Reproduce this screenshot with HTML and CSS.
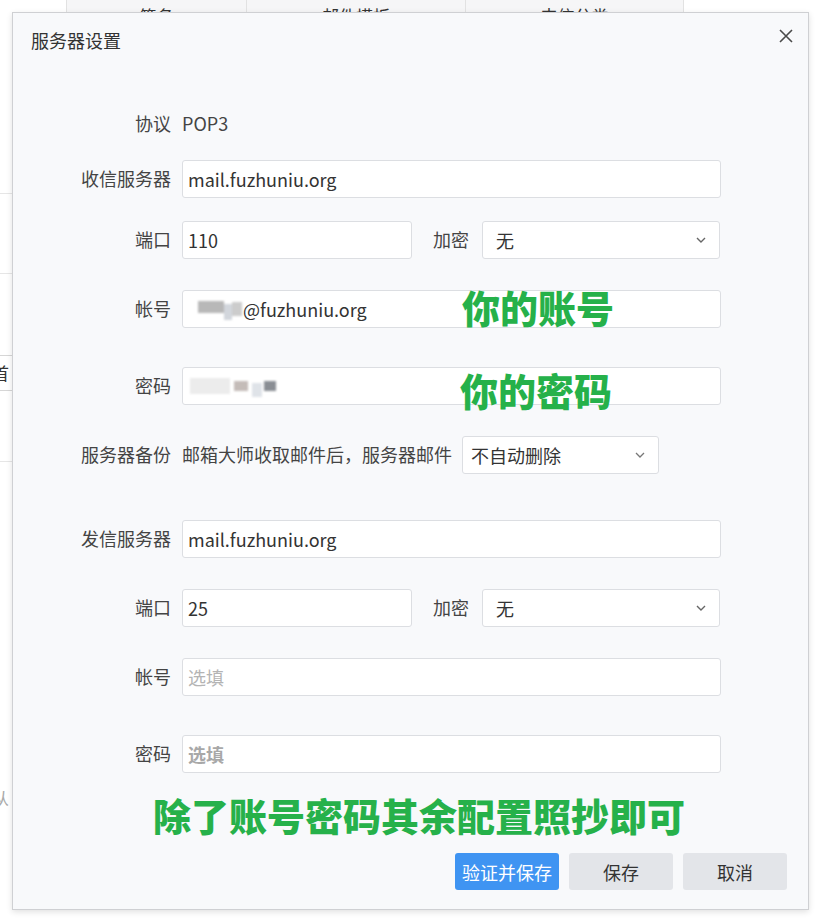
FILE: index.html
```html
<!DOCTYPE html>
<html lang="zh-CN">
<head>
<meta charset="utf-8">
<title>服务器设置</title>
<link rel="stylesheet" href="styles.css">
</head>
<body>
<div class="page">
  <div class="side">
    <div class="side-line sl1"></div>
    <div class="side-line sl2"></div>
    <div class="side-box">首</div>
    <div class="side-line sl3"></div>
    <div class="side-text">从</div>
  </div>
  <div class="main">
    <div class="tabs">
      <div class="tab tab1">签名</div>
      <div class="tab tab2">邮件模板</div>
      <div class="tab tab3">来信分类</div>
    </div>
  </div>
</div>

<div class="dialog">
  <div class="dlg-head">
    <span class="dlg-title">服务器设置</span>
    <span class="close"><svg width="16" height="16" viewBox="0 0 16 16"><path d="M2 2 L14 14 M14 2 L2 14" stroke="#4a4a4a" stroke-width="1.6" fill="none"/></svg></span>
  </div>

  <div class="form">
    <div class="row">
      <span class="lbl">协议</span><span class="val">POP3</span>
    </div>
    <div class="row mt17">
      <span class="lbl">收信服务器</span><div class="input full">mail.fuzhuniu.org</div>
    </div>
    <div class="row mt23">
      <span class="lbl">端口</span><div class="input port">110</div>
      <span class="lbl2">加密</span>
      <div class="select enc"><span>无</span><svg class="chev" width="10" height="6" viewBox="0 0 10 6"><path d="M1 1 L5 5 L9 1" stroke="#666" stroke-width="1.4" fill="none"/></svg></div>
    </div>
    <div class="row mt31">
      <span class="lbl">帐号</span>
      <div class="input full"><span class="mosaic m-acc"><i class="b1"></i><i class="b2"></i><i class="b3"></i></span>@fuzhuniu.org</div>
    </div>
    <div class="row mt39">
      <span class="lbl">密码</span>
      <div class="input full"><span class="mosaic m-pwd"><i class="p1"></i><i class="p2"></i><i class="p3"></i><i class="p4"></i></span></div>
    </div>
    <div class="row mt31">
      <span class="lbl">服务器备份</span><span class="val">邮箱大师收取邮件后，服务器邮件</span>
      <div class="select bak"><span>不自动删除</span><svg class="chev" width="10" height="6" viewBox="0 0 10 6"><path d="M1 1 L5 5 L9 1" stroke="#777" stroke-width="1.3" fill="none"/></svg></div>
    </div>
    <div class="row mt46">
      <span class="lbl">发信服务器</span><div class="input full">mail.fuzhuniu.org</div>
    </div>
    <div class="row mt31">
      <span class="lbl">端口</span><div class="input port">25</div>
      <span class="lbl2">加密</span>
      <div class="select enc"><span>无</span><svg class="chev" width="10" height="6" viewBox="0 0 10 6"><path d="M1 1 L5 5 L9 1" stroke="#666" stroke-width="1.4" fill="none"/></svg></div>
    </div>
    <div class="row mt31">
      <span class="lbl">帐号</span><div class="input full ph">选填</div>
    </div>
    <div class="row mt39">
      <span class="lbl">密码</span><div class="input full ph ph-bold">选填</div>
    </div>
  </div>

  <div class="footer">
    <button class="btn primary">验证并保存</button>
    <button class="btn">保存</button>
    <button class="btn">取消</button>
  </div>

  <div class="note note-acc">你的账号</div>
  <div class="note note-pwd">你的密码</div>
  <div class="note note-all">除了账号密码其余配置照抄即可</div>
</div>
</body>
</html>
```

FILE: styles.css
```css
* { box-sizing: border-box; }
html, body {
  margin: 0;
  padding: 0;
  background: #ffffff;
  width: 821px;
  height: 922px;
  overflow: hidden;
  font-family: "Noto Sans CJK SC", "Noto Sans", sans-serif;
  color: #333;
}

/* background page */
.page {
  display: flex;
  height: 922px;
}
.side {
  width: 66px;
  display: flex;
  flex-direction: column;
}
.side-line {
  height: 1px;
  background: #e6e6e6;
}
.sl1 { margin-top: 193px; }
.sl2 { margin-top: 79px; }
.side-box {
  margin-top: 81px;
  height: 36px;
  width: 40px;
  margin-left: -20px;
  border: 1px solid #d6d6d6;
  background: #fff;
  font-size: 17px;
  line-height: 34px;
  text-align: right;
  padding-right: 10px;
  color: #333;
}
.sl3 { margin-top: 70px; }
.side-text {
  margin-top: 323px;
  margin-left: -8px;
  font-size: 17px;
  color: #aaa;
}
.main { flex: 1; }
.tabs {
  display: flex;
  height: 40px;
}
.tab {
  background: #f6f6f7;
  border-right: 1px solid #e2e2e2;
  text-align: center;
  font-size: 17px;
  line-height: 32px;
  color: #333;
}
.tab1 { width: 181px; border-left: 1px solid #e2e2e2; }
.tab2 { width: 219px; }
.tab3 { width: 218px; }

/* dialog */
.dialog {
  position: absolute;
  left: 12px;
  top: 12px;
  width: 797px;
  height: 898px;
  background: #f8f9fb;
  border: 1px solid #cfd0d3;
  box-shadow: 0 2px 6px rgba(0, 0, 0, 0.12);
  display: flex;
  flex-direction: column;
}
.dlg-head {
  display: flex;
  justify-content: space-between;
  align-items: flex-start;
  padding: 14px 14px 0 18px;
  height: 39px;
}
.dlg-title {
  font-size: 18px;
  line-height: 26px;
  color: #333;
}
.close {
  margin-top: 1px;
  width: 16px;
  height: 16px;
  display: block;
}
.close svg { display: block; }

.form {
  display: flex;
  flex-direction: column;
  padding-top: 53px;
}
.row {
  display: flex;
  align-items: center;
  height: 38px;
  font-size: 18px;
}
.row > .lbl, .row > .val, .row > .lbl2 { position: relative; top: -1px; }
.mt17 { margin-top: 17px; }
.mt23 { margin-top: 23px; }
.mt31 { margin-top: 31px; }
.mt39 { margin-top: 39px; }
.mt46 { margin-top: 46px; }

.lbl {
  width: 158px;
  text-align: right;
  margin-right: 11px;
  color: #444;
  white-space: nowrap;
}
.lbl2 {
  margin-left: 21px;
  margin-right: 13px;
  color: #444;
  white-space: nowrap;
}
.val {
  color: #444;
  white-space: nowrap;
}
.input {
  height: 38px;
  background: #fff;
  border: 1px solid #dcdee2;
  border-radius: 3px;
  padding-left: 5px;
  line-height: 35px;
  color: #333;
  display: flex;
  align-items: center;
  white-space: nowrap;
}
.full { width: 539px; }
.port { width: 230px; }
.ph { color: #b4b4b4; }
.ph-bold { color: #a8a8a8; font-weight: 700; }

.select {
  height: 38px;
  background: #fff;
  border: 1px solid #dcdee2;
  border-radius: 3px;
  display: flex;
  align-items: center;
  justify-content: space-between;
  color: #333;
}
.enc {
  width: 238px;
  padding: 0 13px 0 13px;
}
.bak {
  width: 197px;
  margin-left: 10px;
  padding: 0 13px 0 8px;
}
.chev { display: block; }

/* blurred/mosaic parts */
.mosaic {
  display: inline-flex;
  align-items: center;
  filter: blur(1.2px);
}
.mosaic i { display: block; }
.m-acc { margin-left: 10px; margin-right: 1px; }
.m-acc .b1 { width: 26px; height: 12px; background: #b8b8b8; margin-top: -4px; }
.m-acc .b2 { width: 8px; height: 16px; background: #d2d6dc; margin-top: 6px; }
.m-acc .b3 { width: 10px; height: 14px; background: #9a9a9a; opacity: .5; }
.m-pwd { margin-left: 2px; }
.m-pwd .p1 { width: 40px; height: 16px; background: #ececec; }
.m-pwd .p2 { width: 14px; height: 10px; background: #c4bcb8; margin-left: 4px; }
.m-pwd .p3 { width: 10px; height: 14px; background: #dfe3e8; margin-left: 4px; margin-top: 8px; }
.m-pwd .p4 { width: 12px; height: 10px; background: #8a8e94; margin-left: 2px; }

.footer {
  display: flex;
  justify-content: flex-end;
  gap: 10px;
  margin-top: 80px;
  padding-right: 21px;
}
.btn {
  width: 104px;
  height: 37px;
  border: none;
  border-radius: 3px;
  background: #e3e5e9;
  color: #333;
  font-family: "Noto Sans CJK SC", "Noto Sans", sans-serif;
  font-size: 18px;
  padding: 0;
}
.primary {
  background: #3f94f2;
  color: #fff;
}

/* green annotations overlaid on the screenshot */
.note {
  position: absolute;
  color: #26b14a;
  font-weight: 900;
  font-size: 38px;
  line-height: 38px;
  white-space: nowrap;
}
.note-acc { left: 449px; top: 275px; }
.note-pwd { left: 447px; top: 358px; }
.note-all { left: 140px; top: 783px; }
```
